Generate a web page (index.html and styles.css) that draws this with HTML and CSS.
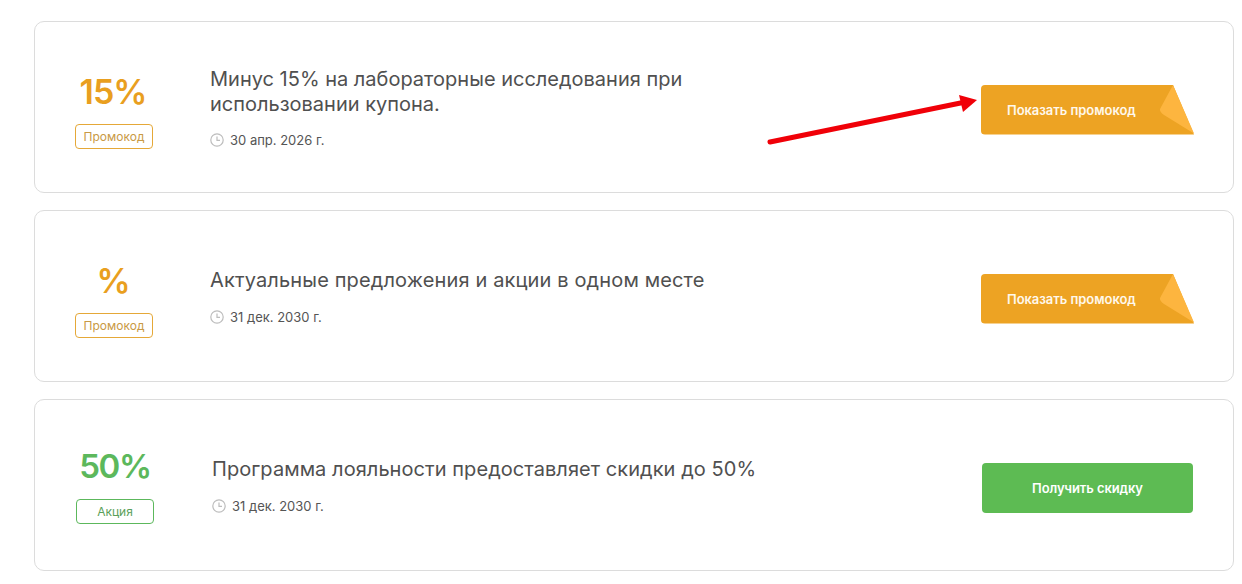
FILE: index.html
```html
<!DOCTYPE html>
<html lang="ru">
<head>
    <meta charset="UTF-8">
    <title>Промокоды</title>
    <link rel="stylesheet" href="styles.css">
</head>
<body>
    <div class="list">

      <div class="card">
        <div class="discount">
          <div class="value orange">15%</div>
          <div class="badge orange">Промокод</div>
        </div>
        <div class="info info-two-lines">
          <div class="title">Минус 15% на лабораторные исследования при использовании купона.</div>
          <div class="date">
            <svg class="clock" viewBox="0 0 14 14"><circle cx="7" cy="7" r="6.2"/><path d="M7 3.5V7.4H10"/></svg>
            30 апр. 2026 г.
          </div>
        </div>
        <a class="promo">
          <svg class="promo-bg" viewBox="0 0 213 50">
            <path d="M4 0H192L213 49.500H4Q0 49.500 0 46V4Q0 0 4 0Z" fill="#eda323"/>
            <path d="M192 0L179 24Q178.500 27 183 30L213 48.500Z" fill="#fdb53f"/>
          </svg>
          <span class="promo-text">Показать промокод</span>
        </a>
      </div>

      <div class="card">
        <div class="discount">
          <div class="value orange">%</div>
          <div class="badge orange">Промокод</div>
        </div>
        <div class="info">
          <div class="title">Актуальные предложения и акции в одном месте</div>
          <div class="date">
            <svg class="clock" viewBox="0 0 14 14"><circle cx="7" cy="7" r="6.2"/><path d="M7 3.5V7.4H10"/></svg>
            31 дек. 2030 г.
          </div>
        </div>
        <a class="promo">
          <svg class="promo-bg" viewBox="0 0 213 50">
            <path d="M4 0H192L213 49.500H4Q0 49.500 0 46V4Q0 0 4 0Z" fill="#eda323"/>
            <path d="M192 0L179 24Q178.500 27 183 30L213 48.500Z" fill="#fdb53f"/>
          </svg>
          <span class="promo-text">Показать промокод</span>
        </a>
      </div>

      <div class="card card-sale">
        <div class="discount">
          <div class="value green">50%</div>
          <div class="badge green">Акция</div>
        </div>
        <div class="info">
          <div class="title">Программа лояльности предоставляет скидки до 50%</div>
          <div class="date">
            <svg class="clock" viewBox="0 0 14 14"><circle cx="7" cy="7" r="6.2"/><path d="M7 3.5V7.4H10"/></svg>
            31 дек. 2030 г.
          </div>
        </div>
        <a class="get">Получить скидку</a>
      </div>

    </div>

    <!-- стрелка поверх первой карточки -->
    <svg class="arrow" width="220" height="60" viewBox="0 0 220 60">
      <path d="M5 51L198 11.500" stroke="#f00008" stroke-width="5" stroke-linecap="round" fill="none"/>
      <path d="M212 9L194 4L198 21Z" fill="#f00008"/>
    </svg>
</body>
</html>
```

FILE: styles.css
```css
body{
  margin: 0;
  background-color: white;
  font-family: Inter, "Noto Sans", sans-serif;
  overflow: hidden;
}

.list{
  display: flex;
  flex-direction: column;
  gap: 17px;
  width: 1200px;
  margin-left: 34px;
  padding-top: 21px;
}

.card{
  display: flex;
  align-items: center;
  box-sizing: border-box;
  height: 172px;
  padding: 0 39px 0 40px;
  background-color: white;
  border: 1px solid #dcdcdc;
  border-radius: 10px;
}

.discount{
  display: flex;
  flex-direction: column;
  align-items: center;
  flex: none;
  width: 78px;
  margin-right: 57px;
  margin-top: 6px;
}

.value{
  font-size: 34px;
  font-weight: 600;
  line-height: 40px;
  letter-spacing: -1px;
  margin-right: 2px;
  margin-bottom: 12px;
  white-space: nowrap;
}

.badge{
  box-sizing: border-box;
  width: 78px;
  height: 25px;
  line-height: 23px;
  text-align: center;
  font-size: 12px;
  border: 1px solid;
  border-radius: 4px;
}

.orange{
  color: #e99f1f;
}

.badge.orange{
  color: #c99a45;
  border-color: #e5a838;
}

.green{
  color: #5cb85c;
}

.badge.green{
  color: #5a9f5a;
  border-color: #5cb85c;
}

.info{
  flex: 1;
  margin-top: 2px;
}

.title{
  font-size: 20px;
  line-height: 25px;
  letter-spacing: .14px;
  color: #505050;
}

.date{
  display: flex;
  align-items: center;
  gap: 6px;
  margin-top: 15px;
  font-size: 13px;
  line-height: 18px;
  color: #555;
}

.info-two-lines .title{
  width: 500px;
  letter-spacing: 0;
}

.info-two-lines .date{
  margin-top: 14px;
}

.clock{
  width: 14px;
  height: 14px;
  fill: none;
  stroke: #bdbdbd;
  stroke-width: 1.2;
}

.promo{
  position: relative;
  display: block;
  flex: none;
  width: 213px;
  height: 50px;
  margin-top: 6px;
}

.promo-bg{
  position: absolute;
  left: 0;
  top: 0;
  width: 213px;
  height: 50px;
}

.promo-text{
  position: relative;
  display: block;
  padding-left: 26px;
  line-height: 50px;
  font-size: 13px;
  font-weight: 600;
  letter-spacing: -.05px;
  color: #fff8ec;
}

.get{
  display: block;
  flex: none;
  width: 211px;
  height: 50px;
  margin-top: 6px;
  margin-right: 1px;
  line-height: 50px;
  text-align: center;
  font-size: 13px;
  font-weight: 600;
  letter-spacing: -.1px;
  color: white;
  background-color: #5dbb53;
  border-radius: 4px;
}

.card-sale .discount{
  width: 78px;
  margin-left: 1px;
  margin-right: 58px;
  margin-top: 0;
}

.card-sale .value{
  font-size: 33px;
  letter-spacing: -1.4px;
  margin-right: 0;
  margin-bottom: 13px;
}

.card-sale .title{
  letter-spacing: .06px;
}

.arrow{
  position: absolute;
  left: 765px;
  top: 91px;
}
```
